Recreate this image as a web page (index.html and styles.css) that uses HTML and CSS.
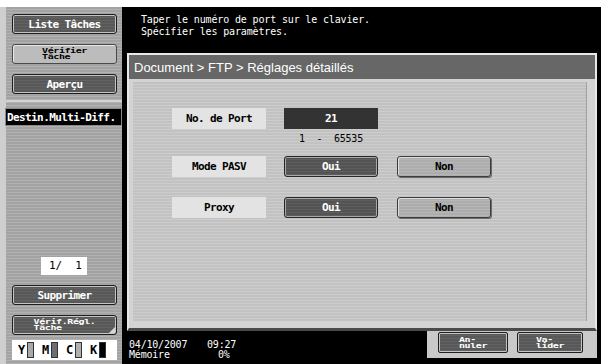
FILE: index.html
```html
<!DOCTYPE html>
<html lang="fr">
<head>
    <meta charset="UTF-8">
    <meta name="viewport" content="width=device-width, initial-scale=1.0">
    <title>Réglages détaillés FTP</title>
    <link rel="stylesheet" href="styles.css">
</head>
<body>
    <div class="screen">
        <div class="sidebar">
            <div class="btn btn-dark side-btn">Liste Tâches</div>
            <div class="btn btn-light side-btn"><span class="tiny">Vérifier<br>Tâche</span></div>
            <div class="btn btn-dark side-btn">Aperçu</div>
            <div class="sep"></div>
            <div class="destin">Destin.Multi-Diff.</div>
            <div class="spacer"></div>
            <div class="counter">1/  1</div>
            <div class="btn btn-dark side-btn">Supprimer</div>
            <div class="btn btn-dark side-btn corner"><span class="tiny">Vérif.Régl.<br>Tâche</span></div>
            <div class="toner">
                <div class="ink"><span>Y</span><i class="bar bar-y"></i></div>
                <div class="ink"><span>M</span><i class="bar bar-m"></i></div>
                <div class="ink"><span>C</span><i class="bar bar-c"></i></div>
                <div class="ink"><span>K</span><i class="bar bar-k"></i></div>
            </div>
        </div>
        <div class="main">
            <div class="message">
                Taper le numéro de port sur le clavier.<br>
                Spécifier les paramètres.
            </div>
            <div class="panel">
                <div class="panel-title">Document &gt; FTP &gt; Réglages détaillés</div>
                <div class="panel-body">
                    <div class="field field-port">
                        <div class="box label-box">No. de Port</div>
                        <div class="value-col">
                            <div class="box value-box">21</div>
                            <div class="range">1  -  65535</div>
                        </div>
                    </div>
                    <div class="field">
                        <div class="box label-box">Mode PASV</div>
                        <div class="box opt opt-on">Oui</div>
                        <div class="box opt opt-off">Non</div>
                    </div>
                    <div class="field">
                        <div class="box label-box">Proxy</div>
                        <div class="box opt opt-on">Oui</div>
                        <div class="box opt opt-off">Non</div>
                    </div>
                </div>
            </div>
            <div class="bottom">
                <div class="status">
                    <span>04/10/2007</span><span>09:27</span>
                    <span>Mémoire</span><span class="mem">0%</span>
                </div>
                <div class="actions">
                    <div class="btn btn-dark act-btn act-cancel"><span class="tiny">An-<br>nuler</span></div>
                    <div class="btn btn-dark act-btn"><span class="tiny">Va-<br>lider</span></div>
                </div>
            </div>
        </div>
    </div>
</body>
</html>
```

FILE: styles.css
```css
body {
    margin: 0;
    background: #fff;
    font-family: "DejaVu Sans Mono", monospace;
}
.screen {
    display: flex;
    width: 601px;
    height: 357px;
    margin-top: 7px;
}
.sidebar {
    width: 126px;
    box-sizing: border-box;
    border-left: 6px solid #cfcfcf;
    border-right: 4px solid #000;
    background: repeating-linear-gradient(#a3a3a3 0 2px, #b2b2b2 2px 3px);
    display: flex;
    flex-direction: column;
    padding-top: 7px;
    padding-bottom: 4px;
}
.btn {
    height: 20px;
    box-sizing: border-box;
    border-radius: 3px;
    display: flex;
    align-items: center;
    justify-content: center;
    font-size: 11px;
    font-weight: bold;
    letter-spacing: -0.6px;
}
.btn-dark {
    background: repeating-linear-gradient(#585858 0 2px, #626262 2px 3px);
    color: #fff;
    border: 1px solid #1e1e1e;
    box-shadow: inset 0 0 0 1px #c4c4c4;
}
.btn-light {
    background: #bcbcbc;
    color: #000;
    border: 1px solid #4a4a4a;
    box-shadow: inset 1px 1px 0 #e8e8e8;
}
.side-btn {
    margin: 0 5px 10px 6px;
}
.tiny {
    display: inline-block;
    text-align: left;
    font-size: 10px;
    line-height: 9px;
    letter-spacing: -0.4px;
    transform: scaleY(0.66);
}
.corner {
    position: relative;
    margin-bottom: 5px;
}
.corner::after {
    content: "";
    position: absolute;
    right: 1px;
    bottom: 1px;
    border-left: 6px solid transparent;
    border-bottom: 6px solid #d8d8d8;
}
.sep {
    height: 2px;
    background: #d2d2d2;
    margin: -4px 0 6px;
}
.destin {
    height: 18px;
    box-sizing: border-box;
    background: #000;
    color: #fff;
    border: 1px solid #8a8a8a;
    font-size: 11px;
    font-weight: bold;
    letter-spacing: -0.6px;
    display: flex;
    align-items: center;
    padding-left: 1px;
    margin-left: -1px;
}
.spacer {
    flex: 1;
}
.counter {
    width: 46px;
    height: 18px;
    box-sizing: border-box;
    margin: 0 0 10px 35px;
    background: #fff;
    font-size: 11px;
    line-height: 18px;
    text-align: right;
    padding-right: 5px;
    white-space: pre;
}
.toner {
    height: 20px;
    margin: 0 5px 0 6px;
    background: #fff;
    display: flex;
    align-items: center;
    padding-left: 6px;
}
.ink {
    width: 24px;
    display: flex;
    align-items: center;
    gap: 2px;
    font-size: 12px;
    font-weight: bold;
}
.bar {
    width: 5px;
    height: 14px;
    border: 1px solid #333;
}
.bar-y { background: #a8a8a8; }
.bar-m { background: #6e6e6e; }
.bar-c { background: #b0b0b0; }
.bar-k { background: #000; }

.main {
    flex: 1;
    background: #000;
    display: flex;
    flex-direction: column;
}
.message {
    height: 46px;
    box-sizing: border-box;
    padding: 7px 0 0 15px;
    color: #fff;
    font-size: 10px;
    line-height: 12px;
    letter-spacing: -0.15px;
}
.panel {
    height: 278px;
    box-sizing: border-box;
    margin: 0 4px 0 1px;
    background: #d3d3d3;
    border: 2px solid #e8e8e8;
    border-bottom: 3px solid #4a4a4a;
    display: flex;
    flex-direction: column;
}
.panel-title {
    height: 24px;
    background: #676767;
    color: #fff;
    font-family: "Liberation Sans", Arial, sans-serif;
    font-size: 13px;
    display: flex;
    align-items: center;
    padding-left: 5px;
}
.panel-body {
    flex: 1;
    margin: 3px 8px 7px 4px;
    background: repeating-linear-gradient(#c2c2c2 0 2px, #cdcdcd 2px 3px);
    padding: 26px 0 0 39px;
    border-right: 1px solid #a0a0a0;
}
.field {
    display: flex;
    align-items: flex-start;
    column-gap: 18px;
    margin-bottom: 20px;
}
.field-port {
    margin-bottom: 11px;
}
.box {
    width: 94px;
    height: 21px;
    box-sizing: border-box;
    display: flex;
    align-items: center;
    justify-content: center;
    font-size: 11px;
    font-weight: bold;
    letter-spacing: -0.6px;
}
.label-box {
    background: #e3e3e3;
    color: #000;
}
.value-box {
    background: #333;
    color: #fff;
}
.range {
    margin-top: 4px;
    font-size: 10px;
    line-height: 12px;
    text-align: center;
    white-space: pre;
    letter-spacing: -0.2px;
}
.opt {
    border-radius: 3px;
}
.opt-on {
    background: repeating-linear-gradient(#535353 0 2px, #5e5e5e 2px 3px);
    color: #fff;
    border: 1px solid #262626;
    box-shadow: inset 0 0 0 1px #a8a8a8;
}
.opt-off {
    margin-left: 1px;
    background: repeating-linear-gradient(#adadad 0 2px, #b6b6b6 2px 3px);
    color: #000;
    border: 1px solid #3c3c3c;
    box-shadow: inset 1px 1px 0 #dedede, 1px 1px 0 #6a6a6a;
}

.bottom {
    flex: 1;
    display: flex;
}
.status {
    flex: 1;
    padding: 9px 0 0 3px;
    color: #fff;
    font-size: 10px;
    line-height: 10px;
    letter-spacing: -0.2px;
    display: grid;
    grid-template-columns: 78px auto;
    align-content: start;
}
.mem {
    padding-left: 11px;
}
.actions {
    width: 170px;
    box-sizing: border-box;
    margin: 0 4px 6px 0;
    background: #c9c9c9;
    display: flex;
    gap: 9px;
    padding: 1px 0 0 11px;
}
.act-btn {
    width: 66px;
    height: 21px;
    border-radius: 2px;
}
.act-cancel {
    width: 70px;
}
```
